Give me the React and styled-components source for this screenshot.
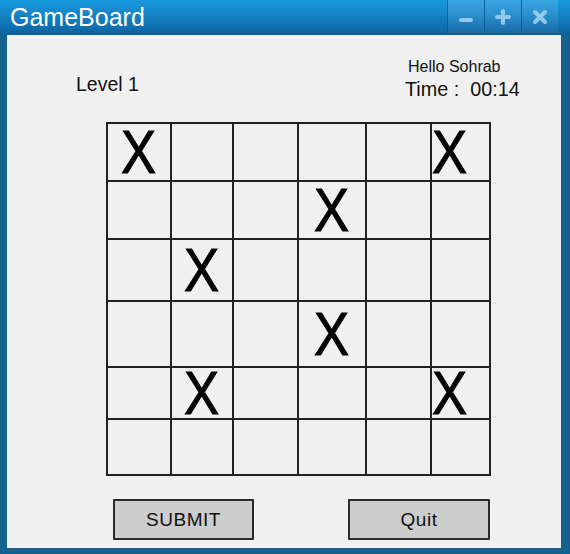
import React from 'react';
import styled, { createGlobalStyle } from 'styled-components';

const GlobalStyle = createGlobalStyle`
  html, body {
    margin: 0;
    padding: 0;
  }
  body {
    background: #16628f;
    font-family: "Liberation Sans", Arial, sans-serif;
    overflow: hidden;
  }
`;

const Window = styled.div`
  width: 570px;
  height: 554px;
  display: flex;
  flex-direction: column;
  background: #16628f;
`;

const TitleBar = styled.div`
  height: 35px;
  flex: none;
  display: flex;
  align-items: flex-start;
  background: linear-gradient(#1a9ae0, #0f6eae 80%, #0c5f96);
`;

const Title = styled.div`
  flex: 1;
  color: #fff;
  font-size: 25px;
  line-height: 1;
  padding: 5px 0 0 10px;
`;

const Controls = styled.div`
  display: flex;
  margin-right: 12px;
`;

const WinButton = styled.div`
  width: 37px;
  height: 33px;
  box-sizing: border-box;
  border-left: 1px solid #0d5f95;
  display: flex;
  align-items: center;
  justify-content: center;
  background: linear-gradient(rgba(255, 255, 255, 0.14), rgba(255, 255, 255, 0.04));
`;

const Content = styled.div`
  flex: 1;
  margin: 0 9px 6px 7px;
  padding-top: 24px;
  background: #f0f0f0;
  color: #111;
`;

const Header = styled.div`
  display: grid;
  grid-template-columns: 398px 1fr;
`;

const Level = styled.div`
  font-size: 19.5px;
  line-height: 1;
  margin-top: 16px;
  padding-left: 69px;
`;

const Greeting = styled.div`
  font-size: 16px;
  line-height: 1;
  padding-left: 3px;
`;

const Timer = styled.div`
  font-size: 19.8px;
  line-height: 1;
  margin-top: 4.5px;
  white-space: pre;
`;

const Board = styled.div`
  display: grid;
  grid-template-columns: 64px 62px 65px 68px 65px 59px;
  grid-template-rows: 58px 58px 62px 66px 52px 56px;
  width: fit-content;
  margin: 23px 0 0 99px;
  border-left: 2px solid #222;
  border-top: 2px solid #222;
`;

const Cell = styled.div`
  box-sizing: border-box;
  border-right: 2px solid #222;
  border-bottom: 2px solid #222;
  display: flex;
  align-items: center;
  justify-content: ${p => (p.$edge ? 'flex-start' : 'center')};
`;

const Mark = styled.span`
  display: inline-block;
  font-size: 62px;
  line-height: 1;
  color: #000;
  -webkit-text-stroke: 1px #000;
  transform: scaleX(0.85);
  transform-origin: ${p => (p.$edge ? 'left' : 'center')};
`;

const Actions = styled.div`
  display: flex;
  gap: 94px;
  margin-top: 23px;
  padding-left: 106px;
`;

const Button = styled.button`
  width: ${p => p.$w}px;
  height: 41px;
  box-sizing: border-box;
  border: 2px solid #2b2b2b;
  border-radius: 1px;
  background: #cdcdcd;
  color: #111;
  font-family: "Liberation Sans", Arial, sans-serif;
  font-size: 19px;
  letter-spacing: 0.5px;
  padding: 0;
`;

const ROWS = 6;
const COLS = 6;
const marks = ['0-0', '0-5', '1-3', '2-1', '3-3', '4-1', '4-5'];

const Icon = ({ kind }) => (
  <svg width="18" height="18" viewBox="0 0 18 18">
    <g stroke="#93c9ea" strokeWidth="4" strokeLinecap="round">
      {kind === 'min' && <line x1="4" y1="12" x2="14" y2="12" />}
      {kind === 'max' && (
        <>
          <line x1="3" y1="9" x2="15" y2="9" />
          <line x1="9" y1="3" x2="9" y2="15" />
        </>
      )}
      {kind === 'close' && (
        <>
          <line x1="4" y1="4" x2="14" y2="14" />
          <line x1="14" y1="4" x2="4" y2="14" />
        </>
      )}
    </g>
  </svg>
);

export default function App() {
  const cells = [];
  for (let r = 0; r < ROWS; r++) {
    for (let c = 0; c < COLS; c++) {
      const edge = c === COLS - 1;
      cells.push(
        <Cell key={`${r}-${c}`} $edge={edge}>
          {marks.includes(`${r}-${c}`) && <Mark $edge={edge}>X</Mark>}
        </Cell>
      );
    }
  }

  return (
    <>
      <GlobalStyle />
      <Window>
        <TitleBar>
          <Title>GameBoard</Title>
          <Controls>
            <WinButton><Icon kind="min" /></WinButton>
            <WinButton><Icon kind="max" /></WinButton>
            <WinButton><Icon kind="close" /></WinButton>
          </Controls>
        </TitleBar>
        <Content>
          <Header>
            <Level>Level 1</Level>
            <div>
              <Greeting>Hello Sohrab</Greeting>
              <Timer>{'Time :  00:14'}</Timer>
            </div>
          </Header>
          <Board>{cells}</Board>
          <Actions>
            <Button $w={141}>SUBMIT</Button>
            <Button $w={142}>Quit</Button>
          </Actions>
        </Content>
      </Window>
    </>
  );
}
